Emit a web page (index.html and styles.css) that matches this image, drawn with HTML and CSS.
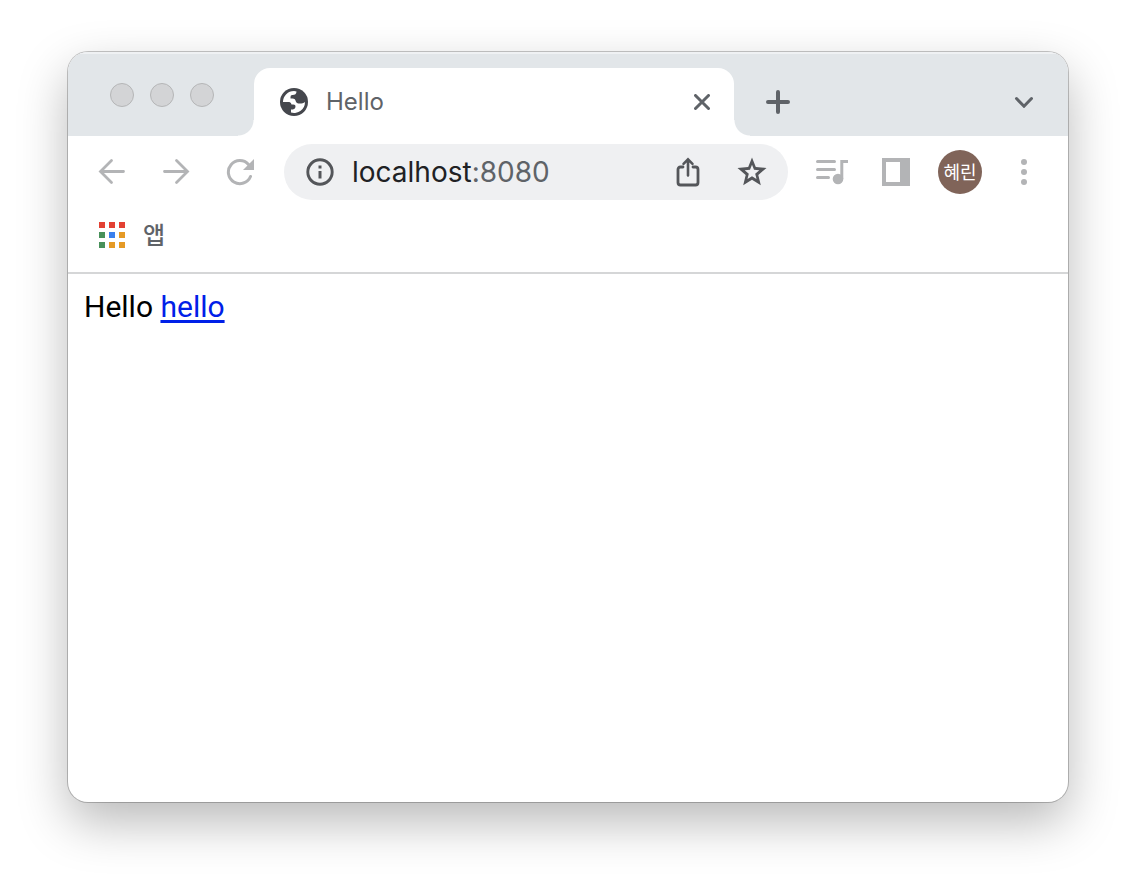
FILE: index.html
```html
<!DOCTYPE html>
<html lang="ko">
<head>
  <meta charset="UTF-8">
  <title>Hello</title>
  <link rel="stylesheet" href="styles.css">
</head>
<body>
  <div class="window">
    <header class="tab-strip">
      <div class="lights">
        <span class="light"></span>
        <span class="light"></span>
        <span class="light"></span>
      </div>
      <div class="tab">
        <svg width="28" height="28" viewBox="0 0 28 28">
          <circle cx="14" cy="14" r="14" fill="#45474d"/>
          <path d="M3 14 A11 11 0 0 1 14 3 L16.500 3.500 C16.500 6 15 7 12.500 7 C10.500 7 10.500 8 10.500 10.500 C13 10.500 15 10.500 15.500 12.500 C16 15 17.500 15.500 20 15.500 C22 15.500 23.500 15 25 14 A11 11 0 0 1 11 24.600 L11 21.500 C13.500 21.500 15.500 21 15.500 18.500 C15.500 16.500 14 16.500 11.500 16.500 C11 14.500 10 14 8 14 Z" fill="#fff"/>
        </svg>
        <span class="tab-title">Hello</span>
        <button class="icon-btn" aria-label="Close tab">
          <svg width="16" height="16" viewBox="0 0 16 16" fill="none" stroke="#5f6368" stroke-width="3" stroke-linecap="round"><path d="M1.500 1.500 L14.500 14.500 M14.500 1.500 L1.500 14.500"/></svg>
        </button>
      </div>
      <button class="icon-btn new-tab-btn" aria-label="New tab">
        <svg width="24" height="24" viewBox="0 0 24 24" fill="none" stroke="#5f6368" stroke-width="4" stroke-linecap="round"><path d="M12 2 V22 M2 12 H22"/></svg>
      </button>
      <button class="icon-btn search-tabs-btn" aria-label="Search tabs">
        <svg width="20" height="12" viewBox="0 0 20 12" fill="none" stroke="#5f6368" stroke-width="3" stroke-linecap="round"><path d="M2.500 2.500 L10 10.200 L17.500 2.500"/></svg>
      </button>
    </header>

    <nav class="toolbar">
      <button class="icon-btn" aria-label="Back">
        <svg width="28" height="28" viewBox="0 0 28 28" fill="none" stroke="#b3b4b6" stroke-width="2.800" stroke-linecap="round"><path d="M25.500 13.500 H3 M13.500 2.500 L2.500 13.500 L13.500 24.500"/></svg>
      </button>
      <button class="icon-btn" aria-label="Forward">
        <svg width="28" height="28" viewBox="0 0 28 28" fill="none" stroke="#b3b4b6" stroke-width="2.800" stroke-linecap="round"><path d="M2.500 13.500 H25 M14.500 2.500 L25.500 13.500 L14.500 24.500"/></svg>
      </button>
      <button class="icon-btn" aria-label="Reload">
        <svg width="28" height="28" viewBox="0 0 28 28"><path d="M22.500 6.500 A11.500 11.500 0 1 0 24.500 18.500" fill="none" stroke="#b3b4b6" stroke-width="3" stroke-linecap="round"/><path d="M28 1 V12 H17 Z" fill="#b3b4b6"/></svg>
      </button>

      <div class="omnibox">
        <svg width="28" height="28" viewBox="0 0 28 28"><circle cx="14" cy="14" r="12.200" fill="none" stroke="#54565a" stroke-width="2.900"/><path d="M12.500 7.500 h3 v3 h-3 Z M12.500 13 h3 v7.500 h-3 Z" fill="#54565a"/></svg>
        <span class="url">localhost<span class="port">:8080</span></span>
        <button class="icon-btn" aria-label="Share">
          <svg width="24" height="30" viewBox="0 0 24 30" fill="none" stroke="#54565a" stroke-width="2.800" stroke-linecap="round"><path d="M7 10 H4.500 Q2 10 2 12.500 V25.500 Q2 28 4.500 28 H19.500 Q22 28 22 25.500 V12.500 Q22 10 19.500 10 H17"/><path d="M12 18.500 V3 M7.500 6.800 L12 2.300 L16.500 6.800" stroke-width="2.600"/></svg>
        </button>
        <button class="icon-btn" aria-label="Bookmark this tab">
          <svg width="30" height="30" viewBox="0 0 30 30" fill="#54565a" fill-rule="evenodd"><path d="M15 0.500 L18.800 10 L29.500 10.900 L21.300 17.900 L23.800 28.300 L15 22.800 L6.200 28.300 L8.700 17.900 L0.500 10.900 L11.200 10 Z M15 7.800 L13 12.800 L7.700 13.300 L11.800 16.800 L10.500 22 L15 19.300 L19.500 22 L18.200 16.800 L22.300 13.300 L17 12.800 Z"/></svg>
        </button>
      </div>

      <button class="icon-btn" aria-label="Media controls">
        <svg width="32" height="26" viewBox="0 0 32 26"><path d="M1.500 2.500 H18.500 M1.500 10.500 H18.500 M1.500 18.500 H12.500" fill="none" stroke="#b3b4b6" stroke-width="3" stroke-linecap="round"/><circle cx="22" cy="20" r="5.300" fill="#b3b4b6"/><path d="M25.800 20 V2.500 H32" fill="none" stroke="#b3b4b6" stroke-width="3"/></svg>
      </button>
      <button class="icon-btn" aria-label="Side panel">
        <svg width="28" height="28" viewBox="0 0 28 28"><path d="M0 0 H28 V28 H0 Z M4 4 V24 H18 V4 Z" fill="#b3b4b6" fill-rule="evenodd"/></svg>
      </button>
      <button class="icon-btn"><span class="avatar">혜린</span></button>
      <button class="icon-btn" aria-label="Menu">
        <svg width="6" height="26" viewBox="0 0 6 26" fill="#b3b4b6"><circle cx="3" cy="3" r="3"/><circle cx="3" cy="13" r="3"/><circle cx="3" cy="23" r="3"/></svg>
      </button>
    </nav>

    <div class="bookmarks">
      <a class="bookmark" href="#">
        <svg width="26" height="26" viewBox="0 0 26 26">
          <path d="M0 0h6v6H0z M10 0h6v6h-6z M20 0h6v6h-6z" fill="#e34133"/>
          <path d="M0 10h6v6H0z M0 20h6v6H0z" fill="#48915a"/>
          <path d="M10 10h6v6h-6z" fill="#3a80ee"/>
          <path d="M20 10h6v6h-6z M10 20h6v6h-6z M20 20h6v6h-6z" fill="#e59a26"/>
        </svg>
        <span class="bookmark-name">앱</span>
      </a>
    </div>

    <main class="page">Hello <a href="#">hello</a></main>
  </div>
</body>
</html>
```
FILE: styles.css
```css
* {
  box-sizing: border-box;
}

body {
  display: flex;
  margin: 0;
  min-height: 100vh;
  padding: 52px 68px 84px;
  background-color: #fff;
  font-family: Inter, "Noto Sans CJK KR", sans-serif;
}

.window {
  flex: 1;
  display: flex;
  flex-direction: column;
  overflow: hidden;
  border-radius: 20px;
  background-color: #fff;
  box-shadow: 0 0 0 1px rgba(0, 0, 0, 0.22), 0 20px 50px rgba(0, 0, 0, 0.28);
}

.icon-btn {
  display: flex;
  align-items: center;
  justify-content: center;
  width: 64px;
  height: 56px;
  padding: 0;
  border: none;
  background: none;
  cursor: pointer;
}

/* Tab strip */
.tab-strip {
  display: flex;
  align-items: center;
  height: 84px;
  padding: 16px 12px 0 42px;
  background-color: #e2e6e9;
  box-shadow: inset 0 2px 0 #eff1f3;
}

.lights {
  display: flex;
  gap: 16px;
  width: 144px;
  padding-bottom: 14px;
}

.light {
  width: 24px;
  height: 24px;
  border: 1px solid #b5b6b7;
  border-radius: 50%;
  background-color: #d3d4d6;
}

.tab {
  position: relative;
  display: flex;
  align-items: center;
  width: 480px;
  height: 68px;
  padding-left: 26px;
  border-radius: 16px 16px 0 0;
  background-color: #fff;
}

/* Curved feet on both sides of the active tab */
.tab::before,
.tab::after {
  content: "";
  position: absolute;
  bottom: 0;
  width: 16px;
  height: 16px;
}

.tab::before {
  right: 100%;
  background: radial-gradient(circle at 0 0, transparent 15px, #fff 16px);
}

.tab::after {
  left: 100%;
  background: radial-gradient(circle at 100% 0, transparent 15px, #fff 16px);
}

.tab-title {
  flex: 1;
  margin-left: 18px;
  padding-bottom: 2px;
  font-size: 24px;
  color: #5f6368;
}

.new-tab-btn {
  margin-left: 12px;
}

.search-tabs-btn {
  margin-left: auto;
}

/* Toolbar */
.toolbar {
  display: flex;
  align-items: center;
  height: 72px;
  padding: 0 12px;
}

.omnibox {
  flex: 1;
  display: flex;
  align-items: center;
  height: 56px;
  margin: 0 12px;
  padding: 0 4px 0 22px;
  border-radius: 28px;
  background-color: #eff0f2;
}

.url {
  flex: 1;
  margin-left: 18px;
  font-size: 28px;
  color: #202124;
}

.port {
  color: #5f6368;
}

.avatar {
  width: 44px;
  height: 44px;
  border-radius: 50%;
  background-color: #806459;
  color: #fff;
  font-family: "Noto Sans CJK KR", sans-serif;
  font-size: 18px;
  line-height: 42px;
}

/* Bookmarks bar */
.bookmarks {
  display: flex;
  height: 66px;
  padding: 0 31px 10px;
  border-bottom: 2px solid #d5d6d7;
}

.bookmark {
  display: flex;
  align-items: center;
  gap: 18px;
  color: #5f6368;
  font-family: "Noto Sans CJK KR", sans-serif;
  font-size: 24px;
  font-weight: 500;
  line-height: 24px;
  text-decoration: none;
}

.bookmark-name {
  padding-bottom: 2px;
}

/* Page content */
.page {
  flex: 1;
  padding: 16px;
  font-family: Roboto, sans-serif;
  font-size: 30px;
  line-height: 34px;
  color: #000;
}

.page a {
  color: #0020e8;
  text-decoration-thickness: 3px;
  text-underline-offset: 3px;
}
```
